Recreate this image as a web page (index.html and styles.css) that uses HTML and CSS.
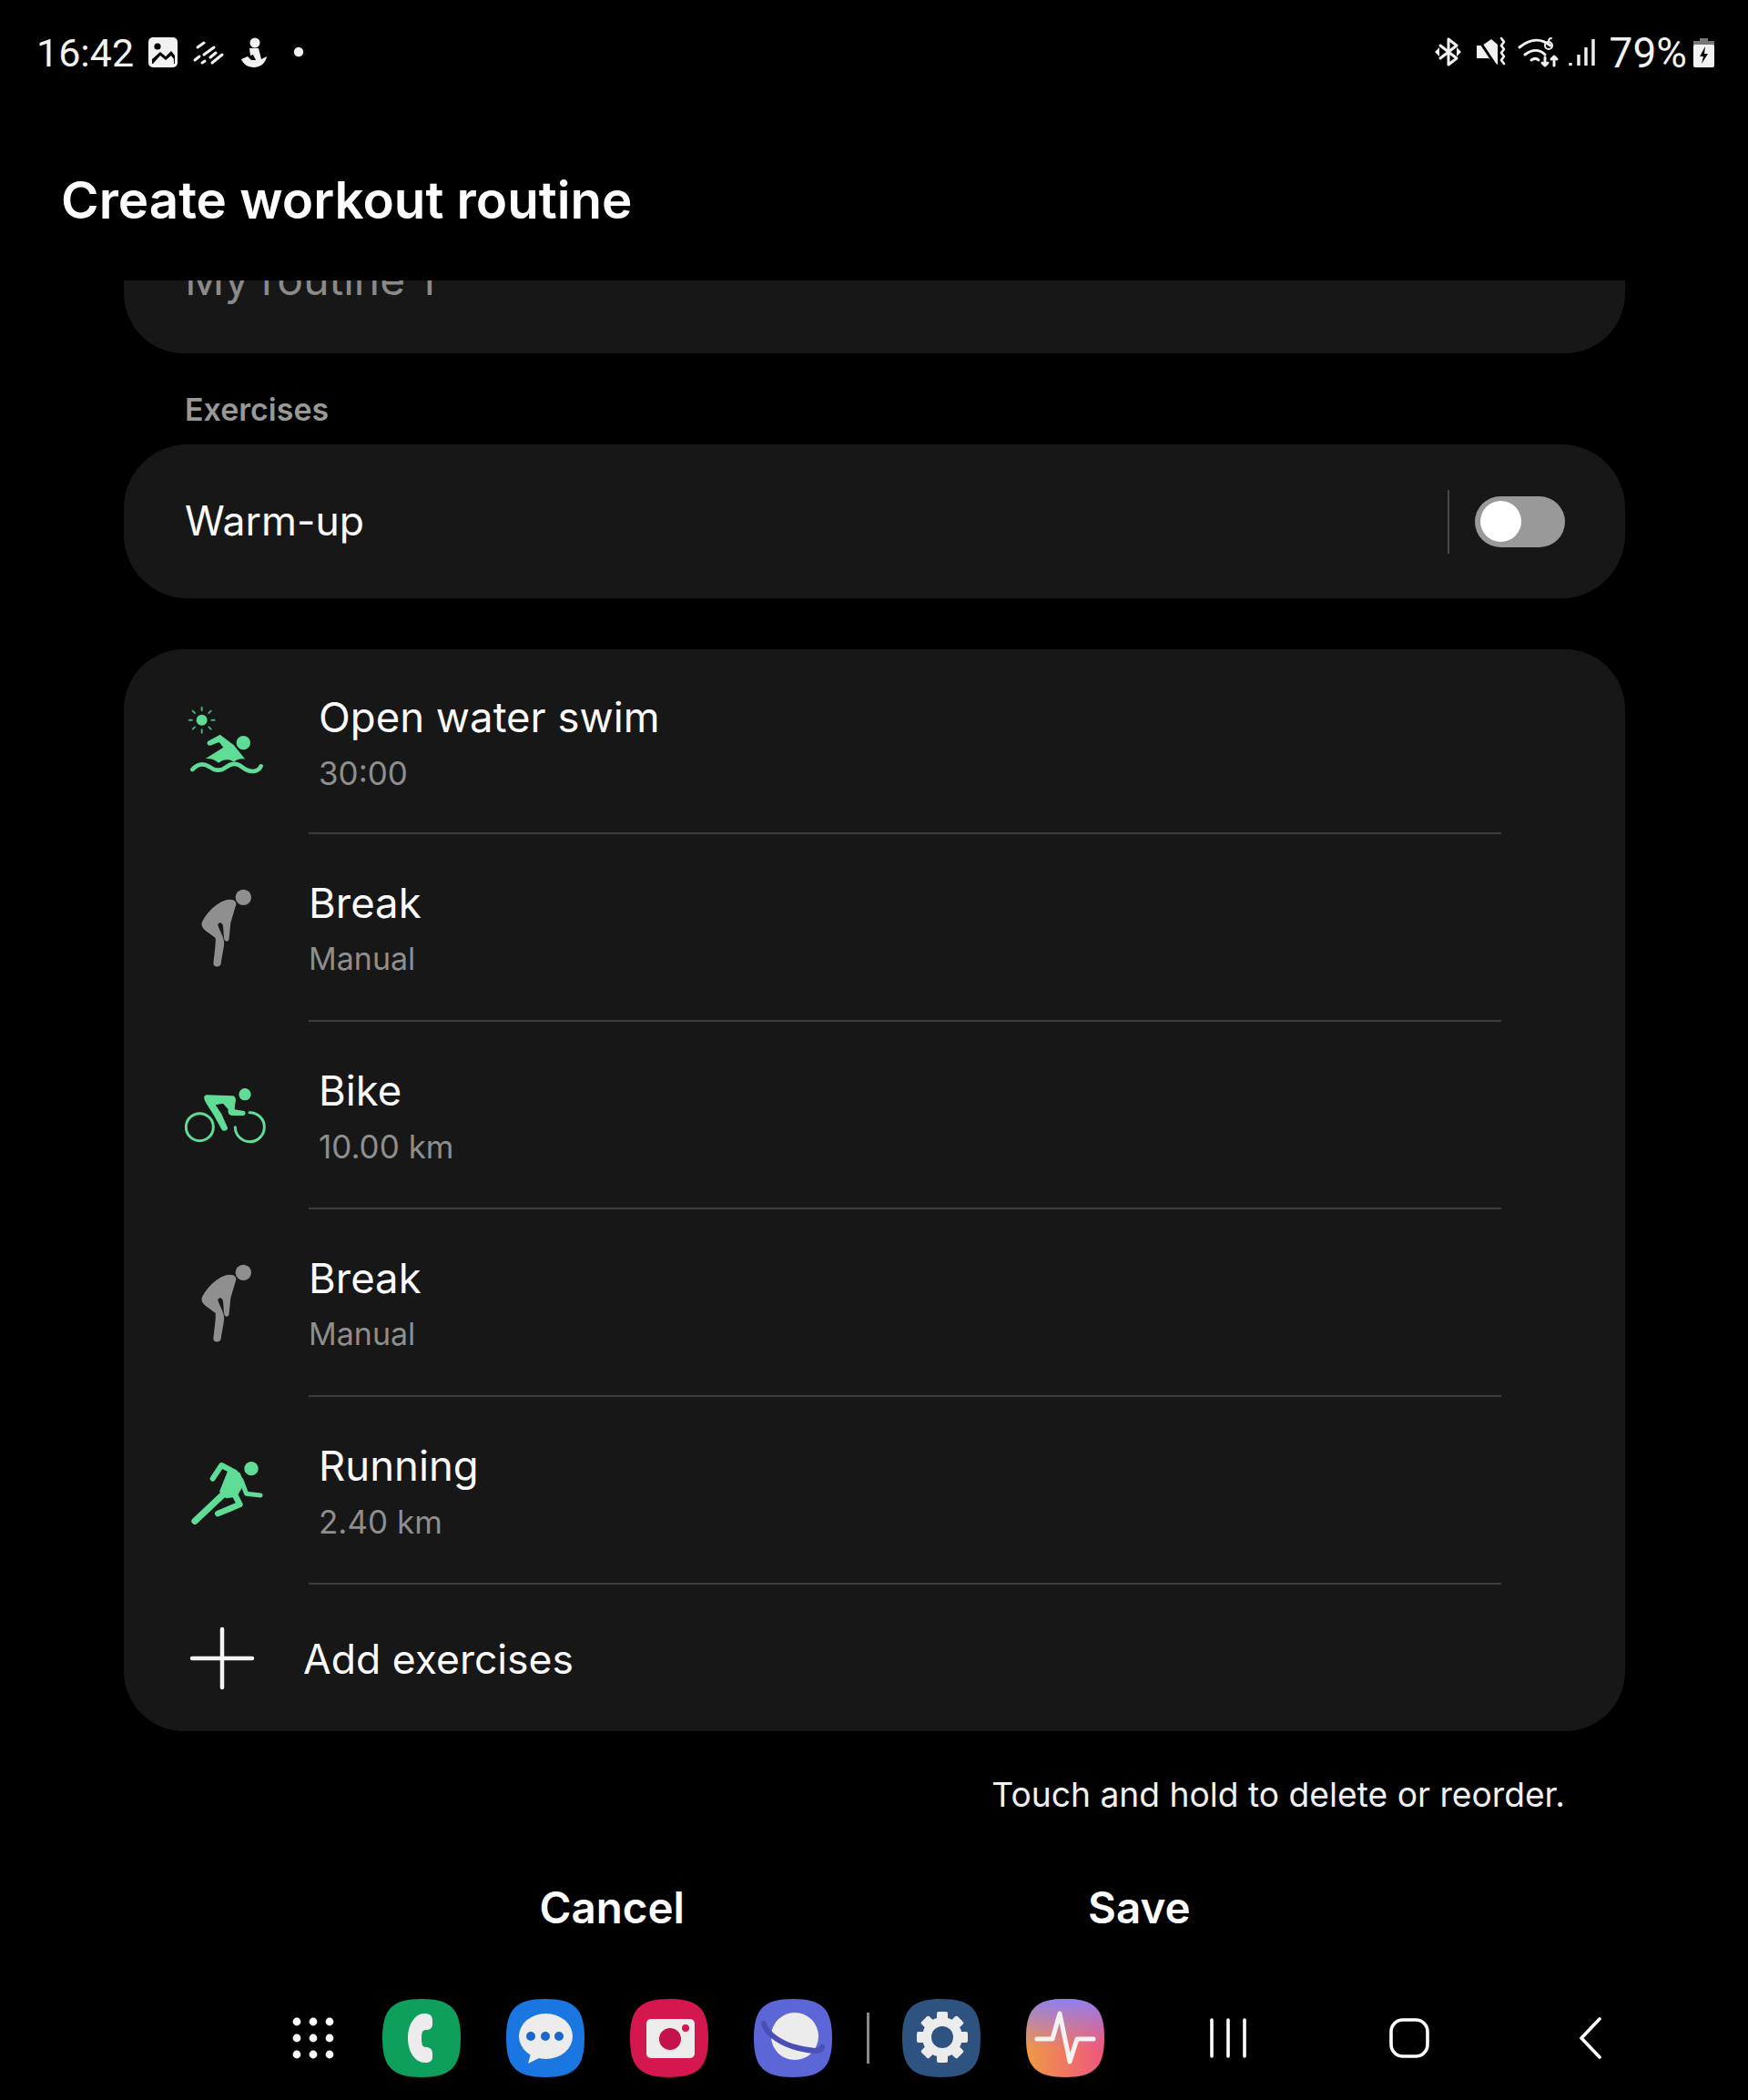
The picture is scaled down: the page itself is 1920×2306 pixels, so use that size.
FILE: index.html
```html
<!DOCTYPE html>
<html lang="en">
<head>
  <meta charset="UTF-8"/>
  <meta name="viewport" content="width=device-width,initial-scale=1.0"/>
  <title>Create workout routine</title>
  <link rel="stylesheet" href="styles.css">
</head>
<body>
  <header class="status-bar">
    <div class="status-left">
      <span class="clock">16:42</span>
      <svg class="notif-icons" viewBox="160 36 175 44" xmlns="http://www.w3.org/2000/svg">
        <rect x="163" y="41" width="32" height="33" rx="5" fill="#f2f2f2"/>
        <circle cx="173" cy="51" r="3.6" fill="#000"/>
        <path d="M167 70v-5l9-8 6 5 6-6 4 5v9z" fill="#000"/>
        <path d="M168 70l8-9 6 5 6-5 3 4v5z" fill="#f2f2f2"/>
        <g stroke="#f2f2f2" stroke-width="3" stroke-linecap="round">
          <path d="M217 52l7-5M214 66l5-4M224 60l11-8M222 69l3-2M231 63l6-5M233 69l11-9"/>
        </g>
        <circle cx="280" cy="47" r="5.5" fill="#f2f2f2"/>
        <path d="M274 53h10l3 12 6-3c-1 7-7 12-14 12-7 0-12-4-14-9l7-3 4 4h5l-3-6-3 1z" fill="#f2f2f2"/>
        <circle cx="328" cy="57" r="5.2" fill="#f2f2f2"/>
      </svg>
    </div>
    <div class="status-right">
      <svg class="system-icons" viewBox="1570 36 185 44" xmlns="http://www.w3.org/2000/svg">
        <g fill="none" stroke="#f2f2f2" stroke-width="3" stroke-linejoin="round" stroke-linecap="round">
          <path d="M1590 43v28l9-7-18-14M1590 43l9 7-18 14"/>
          <path d="M1668 52c12-10 24-10 34-2M1674 60c8-6 16-6 22 0M1681 66c3-2 6-2 8 0"/>
          <path d="M1696 63v8M1693 69l3 3 3-3M1706 72v-9M1703 65l3-3 3 3"/>
          <circle cx="1700" cy="50" r="4" stroke-width="2"/>
          <path d="M1700 46c0-3 1-4 3-4" stroke-width="2"/>
          <path d="M1648 42l3 4-3 4 3 4-3 4 3 4-3 4 3 4" stroke-width="2.6"/>
          <path d="M1724 72v-3M1733 72v-12M1741 72v-20M1749 72v-29" stroke-width="3.4" stroke-linecap="butt"/>
        </g>
        <path d="M1575 57l5-5v10zM1604 57l-5-5v10z" fill="#f2f2f2"/>
        <path d="M1621 50h6l10-7 7 6v22l-10-7h-13z" fill="#f2f2f2"/>
        <path d="M1622 42l20 30" stroke="#000" stroke-width="3"/>
      </svg>
      <span class="battery-pct">79%</span>
      <svg class="battery" viewBox="0 0 23 32" xmlns="http://www.w3.org/2000/svg">
        <path d="M7 0h9v3h7v6H0V3h7z" fill="#777"/>
        <rect y="7" width="23" height="25" rx="2" fill="#f2f2f2"/>
        <path d="M13 9l-6 11h4l-2 8 7-11h-4z" fill="#000"/>
      </svg>
    </div>
  </header>

  <h1 class="page-title">Create workout routine</h1>

  <main class="content">
    <section class="name-card">
      <span class="name-value">My routine 1</span>
    </section>

    <h2 class="section-label">Exercises</h2>

    <section class="warmup-card">
      <span class="warmup-label">Warm-up</span>
      <div class="warmup-switch">
        <span class="switch-divider"></span>
        <span class="switch"><span class="switch-knob"></span></span>
      </div>
    </section>

    <section class="exercise-card">
      <div class="row row-first">
        <svg class="row-icon" viewBox="30 60 330 270" xmlns="http://www.w3.org/2000/svg">
          <circle cx="125" cy="122" r="18" fill="#5fdc96"/>
          <path d="M125 80v10M125 154v10M83 122h10M157 122h10M95 92l7 7M148 145l7 7M95 152l7-7M148 99l7-7" stroke="#5fdc96" stroke-width="6" stroke-linecap="round" opacity=".75"/>
          <circle cx="262" cy="197" r="23" fill="#5fdc96"/>
          <path d="M185 170L145 192c-5 5-2 14 7 14l30-11 14 17-60 38c18-3 32 4 44 13 16-12 36-14 50-3 12-9 24-12 38-9l-38-47z" fill="#5fdc96"/>
          <path d="M94 285c16-18 36-22 56-9 20 15 38 15 57 0 18-13 34-13 51 1 20 16 50 22 62-3" fill="none" stroke="#5fdc96" stroke-width="14" stroke-linecap="round"/>
        </svg>
        <div class="row-body row-indent">
          <span class="row-title">Open water swim</span>
          <span class="row-sub">30:00</span>
        </div>
      </div>

      <div class="row">
        <svg class="row-icon" viewBox="30 672 330 270" xmlns="http://www.w3.org/2000/svg">
          <circle cx="262" cy="706" r="26" fill="#8f8f8f"/>
          <path d="M205 715c-35 10-70 50-80 75-3 15 10 25 25 35l20 15c2 20-5 60-7 85 2 13 22 13 25 0 4-30 12-60 10-75-3-20-18-40-20-55 7-10 14-5 17 5l3 40c2 15 17 15 17 0l5-50 18-60c2-15-18-20-33-15z" fill="#8f8f8f"/>
        </svg>
        <div class="row-body">
          <span class="row-title">Break</span>
          <span class="row-sub row-sub-small">Manual</span>
        </div>
      </div>

      <div class="row">
        <svg class="row-icon" viewBox="30 30 330 270" xmlns="http://www.w3.org/2000/svg">
          <circle cx="118" cy="203" r="45" fill="none" stroke="#5fdc96" stroke-width="9"/>
          <path d="M282 155a48 48 0 1 1-47 48" fill="none" stroke="#5fdc96" stroke-width="9" stroke-linecap="round"/>
          <circle cx="267" cy="95" r="20" fill="#5fdc96"/>
          <path d="M140 97l85 3c10 0 15 10 10 25l-2 20 32 5c7 5 3 15-5 15h-35c-10 0-15-10-13-20l-17-20-25 5 20 30 20 45c2 10-15 15-20 5l-25-45-25-40c-10-15-10-25 0-28z" fill="#5fdc96"/>
        </svg>
        <div class="row-body row-indent">
          <span class="row-title">Bike</span>
          <span class="row-sub">10.00 km</span>
        </div>
      </div>

      <div class="row">
        <svg class="row-icon" viewBox="30 672 330 270" xmlns="http://www.w3.org/2000/svg">
          <circle cx="262" cy="706" r="26" fill="#8f8f8f"/>
          <path d="M205 715c-35 10-70 50-80 75-3 15 10 25 25 35l20 15c2 20-5 60-7 85 2 13 22 13 25 0 4-30 12-60 10-75-3-20-18-40-20-55 7-10 14-5 17 5l3 40c2 15 17 15 17 0l5-50 18-60c2-15-18-20-33-15z" fill="#8f8f8f"/>
        </svg>
        <div class="row-body">
          <span class="row-title">Break</span>
          <span class="row-sub row-sub-small">Manual</span>
        </div>
      </div>

      <div class="row">
        <svg class="row-icon" viewBox="30 95 330 270" xmlns="http://www.w3.org/2000/svg">
          <circle cx="288" cy="157" r="23" fill="#5fdc96"/>
          <g fill="none" stroke="#5fdc96" stroke-linecap="round" stroke-linejoin="round">
            <path d="M161 190l29-44 45 24" stroke-width="18"/>
            <path d="M203 235l-101 95" stroke-width="22"/>
            <path d="M232 240l18 35-72 30" stroke-width="20"/>
            <path d="M255 195l17 45 46 5" stroke-width="15"/>
          </g>
          <path d="M212 160l38 10 16 35-26 45-35 5-22-22z" fill="#5fdc96"/>
        </svg>
        <div class="row-body row-indent">
          <span class="row-title">Running</span>
          <span class="row-sub">2.40 km</span>
        </div>
      </div>

      <div class="row row-add">
        <svg class="row-icon" viewBox="0 0 110 90" xmlns="http://www.w3.org/2000/svg">
          <path d="M54 13v64M21 45h66" stroke="#f4f4f4" stroke-width="4.5" stroke-linecap="round"/>
        </svg>
        <span class="add-label">Add exercises</span>
      </div>
    </section>

    <p class="hint">Touch and hold to delete or reorder.</p>
  </main>

  <div class="actions">
    <button class="action-btn">Cancel</button>
    <button class="action-btn">Save</button>
  </div>

  <footer class="dock">
    <svg class="apps-grid" viewBox="0 0 50 50" xmlns="http://www.w3.org/2000/svg">
      <g fill="#fff">
        <circle cx="7" cy="7" r="4.4"/><circle cx="25" cy="7" r="4.4"/><circle cx="43" cy="7" r="4.4"/>
        <circle cx="7" cy="25" r="4.4"/><circle cx="25" cy="25" r="4.4"/><circle cx="43" cy="25" r="4.4"/>
        <circle cx="7" cy="43" r="4.4"/><circle cx="25" cy="43" r="4.4"/><circle cx="43" cy="43" r="4.4"/>
      </g>
    </svg>

    <svg class="app app-phone" viewBox="0 0 86 86" xmlns="http://www.w3.org/2000/svg">
      <path d="M43 0C75 0 86 11 86 43S75 86 43 86 0 75 0 43 11 0 43 0z" fill="#0e9f5d"/>
      <path d="M46 16c6 0 9 2 9 8v4c0 4-3 6-7 6s-5 3-5 9c0 7 1 10 5 10s7 2 7 7v4c0 4-3 6-8 6-11 0-19-12-19-27s8-27 18-27z" fill="#ececec"/>
    </svg>
    <svg class="app app-messages" viewBox="0 0 86 86" xmlns="http://www.w3.org/2000/svg">
      <path d="M43 0C75 0 86 11 86 43S75 86 43 86 0 75 0 43 11 0 43 0z" fill="#1a76e0"/>
      <ellipse cx="43.5" cy="41" rx="29.5" ry="25" fill="#ececec"/>
      <path d="M27 60l-3 11 14-7z" fill="#ececec"/>
      <circle cx="27" cy="41" r="5" fill="#1a66d0"/><circle cx="43" cy="41" r="5" fill="#1a66d0"/><circle cx="58" cy="41" r="5" fill="#1a66d0"/>
    </svg>
    <svg class="app app-camera" viewBox="0 0 86 86" xmlns="http://www.w3.org/2000/svg">
      <path d="M43 0C75 0 86 11 86 43S75 86 43 86 0 75 0 43 11 0 43 0z" fill="#d4184f"/>
      <rect x="18" y="22" width="53" height="43" rx="5" fill="#ececec"/>
      <circle cx="44" cy="44" r="12" fill="#c4124a"/>
      <circle cx="61" cy="32" r="4" fill="#d4184f"/>
    </svg>
    <svg class="app app-internet" viewBox="0 0 86 86" xmlns="http://www.w3.org/2000/svg">
      <path d="M43 0C75 0 86 11 86 43S75 86 43 86 0 75 0 43 11 0 43 0z" fill="#5c66d6"/>
      <circle cx="45" cy="41" r="26" fill="#ececec"/>
      <path d="M11 27c2 11 20 23 38 27 14 3 25 5 26-1" fill="none" stroke="#4a4fb6" stroke-width="6" stroke-linecap="round"/>
    </svg>

    <span class="dock-divider"></span>

    <svg class="app app-settings" viewBox="0 0 86 86" xmlns="http://www.w3.org/2000/svg">
      <path d="M43 0C75 0 86 11 86 43S75 86 43 86 0 75 0 43 11 0 43 0z" fill="#2f5380"/>
      <g fill="#ececec">
        <circle cx="44" cy="42" r="22"/>
        <rect x="38" y="14" width="12" height="56" rx="2"/>
        <rect x="38" y="14" width="12" height="56" rx="2" transform="rotate(45 44 42)"/>
        <rect x="38" y="14" width="12" height="56" rx="2" transform="rotate(90 44 42)"/>
        <rect x="38" y="14" width="12" height="56" rx="2" transform="rotate(135 44 42)"/>
      </g>
      <circle cx="44" cy="42" r="12" fill="#2f5380"/>
    </svg>
    <svg class="app app-health" viewBox="0 0 86 86" xmlns="http://www.w3.org/2000/svg">
      <defs>
        <linearGradient id="health-base" x1="0" y1="1" x2="1" y2="1">
          <stop offset="0" stop-color="#ee9a45"/>
          <stop offset="1" stop-color="#f0557f"/>
        </linearGradient>
        <linearGradient id="health-top" x1="0" y1="0" x2="0" y2="1">
          <stop offset="0" stop-color="#8d80f2"/>
          <stop offset=".65" stop-color="#a77fd8" stop-opacity="0"/>
        </linearGradient>
      </defs>
      <path d="M43 0C75 0 86 11 86 43S75 86 43 86 0 75 0 43 11 0 43 0z" fill="url(#health-base)"/>
      <path d="M43 0C75 0 86 11 86 43S75 86 43 86 0 75 0 43 11 0 43 0z" fill="url(#health-top)"/>
      <path d="M12 44h17l8-28 11 53 8-25h18" fill="none" stroke="#f2f2f2" stroke-width="5" stroke-linecap="round" stroke-linejoin="round"/>
    </svg>

    <nav class="nav-keys">
      <svg class="key-recents" viewBox="0 0 40 44" xmlns="http://www.w3.org/2000/svg">
        <path d="M2 2v40M20 2v40M38 2v40" stroke="#fff" stroke-width="3.6" stroke-linecap="round"/>
      </svg>
      <svg class="key-home" viewBox="0 0 44 44" xmlns="http://www.w3.org/2000/svg">
        <rect x="2" y="2" width="40" height="40" rx="13" fill="none" stroke="#fff" stroke-width="3.6"/>
      </svg>
      <svg class="key-back" viewBox="0 0 24 46" xmlns="http://www.w3.org/2000/svg">
        <path d="M22 2L2 23l20 21" fill="none" stroke="#fff" stroke-width="3.6" stroke-linecap="round" stroke-linejoin="round"/>
      </svg>
    </nav>
  </footer>
</body>
</html>
```

FILE: styles.css
```css
/* ===== Global ===== */
* { margin: 0; padding: 0; box-sizing: border-box; }
body {
  width: 1920px;
  height: 2306px;
  overflow: hidden;
  background: #000;
  color: #fafafa;
  font-family: 'Inter', sans-serif;
}

/* ===== Status bar ===== */
.status-bar {
  height: 115px;
  display: flex;
  align-items: center;
  justify-content: space-between;
  padding: 0 37px 0 40px;
  font-family: 'Roboto', sans-serif;
  font-size: 43px;
  color: #f2f2f2;
}
.status-left, .status-right { display: flex; align-items: center; }
.notif-icons { width: 175px; height: 44px; margin-left: 13px; }
.system-icons { width: 185px; height: 44px; margin-right: 12px; }
.battery-pct { font-size: 46px; }
.battery { width: 23px; height: 32px; margin-left: 7px; }

/* ===== Title ===== */
.page-title {
  height: 193px;
  padding: 71px 0 0 67px;
  font-size: 56.5px;
  line-height: 68px;
  font-weight: 600;
  color: #fff;
}

/* ===== Content ===== */
.content { margin: 0 135px 0 136px; }
.name-card {
  height: 80px;
  padding-left: 67px;
  overflow: hidden;
  background: #171717;
  border-radius: 0 0 66px 66px;
}
.name-value {
  display: block;
  margin-top: -29px;
  font-size: 48px;
  line-height: 56px;
  color: #8a8a8a;
}
.section-label {
  height: 100px;
  padding: 44px 0 0 67px;
  font-size: 34px;
  line-height: 36px;
  font-weight: 600;
  color: #989898;
}
.warmup-card {
  height: 169px;
  display: flex;
  align-items: center;
  justify-content: space-between;
  padding: 0 66px 0 67px;
  background: #171717;
  border-radius: 70px;
}
.warmup-label { margin-top: -2px; font-size: 44.5px; }
.warmup-switch { display: flex; align-items: center; gap: 28px; }
.switch-divider { width: 2px; height: 70px; background: #474747; }
.switch {
  width: 99px;
  height: 56px;
  display: flex;
  align-items: center;
  padding-left: 6px;
  background: #999;
  border-radius: 28px;
}
.switch-knob { width: 45px; height: 45px; background: #fff; border-radius: 50%; }

/* ===== Exercise list ===== */
.exercise-card {
  height: 1188px;
  margin-top: 56px;
  background: #171717;
  border-radius: 66px;
}
.row { height: 206px; display: flex; align-items: center; padding-left: 54px; }
.row-first { height: 203px; }
.row-add { height: 161px; }
.row-icon { width: 110px; height: 90px; flex-shrink: 0; margin-right: 39px; }
.row-body {
  width: 1310px;
  height: 100%;
  display: flex;
  flex-direction: column;
  justify-content: center;
  padding-top: 10px;
  border-bottom: 2px solid #3d3d3d;
}
.row-indent { padding-left: 11px; }
.row-title { font-size: 45.5px; line-height: 60px; }
.row-sub { font-size: 35px; line-height: 62px; color: #8e8e8e; }
.row-sub-small { font-size: 34px; }
.add-label { margin: 2px 0 0 -6px; font-size: 44.5px; }
.hint {
  margin-top: 44px;
  padding-right: 66px;
  text-align: right;
  font-size: 37.2px;
  line-height: 52px;
  color: #f0f0f0;
}

/* ===== Actions ===== */
.actions {
  display: flex;
  justify-content: center;
  gap: 443px;
  margin-top: 68px;
  padding-right: 20px;
}
.action-btn {
  background: none;
  border: none;
  font-family: inherit;
  font-size: 47.5px;
  line-height: 60px;
  font-weight: 600;
  color: #fff;
}

/* ===== Dock ===== */
.dock {
  display: flex;
  align-items: center;
  height: 86px;
  margin-top: 70px;
  padding-left: 319px;
}
.apps-grid { width: 50px; height: 50px; margin-right: 51px; }
.app { width: 86px; height: 86px; margin-right: 50px; }
.dock-divider { width: 3px; height: 56px; margin: 0 36px 0 -12px; background: #8a8a8a; }
.app-health { margin-right: 0; }
.nav-keys { display: flex; align-items: center; margin-left: 116px; }
.key-recents { width: 40px; height: 44px; margin-right: 157px; }
.key-home { width: 44px; height: 44px; margin-right: 165px; }
.key-back { width: 24px; height: 46px; }
```
